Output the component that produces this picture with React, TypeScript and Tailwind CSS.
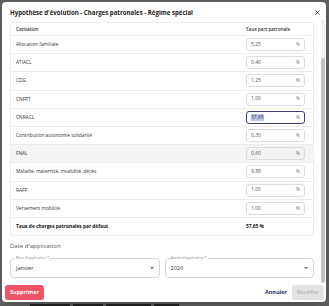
import { X, ChevronDown } from "lucide-react";

const rows = [
  { label: "Allocation familiale", value: "5,25" },
  { label: "ATIACL", value: "0,40" },
  { label: "CDG", value: "1,25" },
  { label: "CNFPT", value: "1,00" },
  { label: "CNRACL", value: "37,65", focused: true },
  { label: "Contribution autonomie solidarité", value: "0,30" },
  { label: "FNAL", value: "0,60", hover: true },
  { label: "Maladie, maternité, invalidité, décès", value: "9,88" },
  { label: "RAFP", value: "1,00" },
  { label: "Versement mobilité", value: "1,00" },
];

function RateInput({ value, focused, hover }: { value: string; focused?: boolean; hover?: boolean }) {
  return (
    <div
      className={
        "flex h-[13px] w-[59px] items-center justify-between rounded-[3px] pl-[4px] pr-[4px] text-[5px] text-[#555] " +
        (focused
          ? "border border-[#3d3f78] bg-white"
          : hover
          ? "border border-[#dcdcdc] bg-[#f3f3f3]"
          : "border border-[#dcdcdc] bg-white")
      }
    >
      <span className={focused ? "bg-[#b9c8f0] text-[#333]" : ""}>{value}</span>
      <span className="text-[#777]">%</span>
    </div>
  );
}

function SelectField({ label, value }: { label: string; value: string }) {
  return (
    <div className="relative flex h-[20px] flex-1 items-center justify-between rounded-[4px] border border-[#d4d4d4] pl-[5px] pr-[4px]">
      <span className="absolute left-[4px] top-[-4px] bg-white px-[1px] text-[3.6px] leading-[6px] text-[#888]">
        {label}
      </span>
      <span className="text-[5.5px] text-[#333]">{value}</span>
      <ChevronDown className="h-[6px] w-[6px] fill-[#666] text-[#666]" strokeWidth={3} />
    </div>
  );
}

export default function App() {
  return (
    <div
      className="relative h-[306px] w-[329px] overflow-hidden bg-[#5e5e5e]"
      style={{ fontFamily: '"Open Sans", "Liberation Sans", sans-serif' }}
    >
      {/* page behind the backdrop, only a blurred sliver shows */}
      <div className="absolute bottom-0 left-[30px] flex gap-[3px] blur-[0.7px]">
        <div className="h-[2px] w-[40px] bg-[#222]" />
        <div className="h-[2px] w-[30px] bg-[#222]" />
        <div className="h-[2px] w-[45px] bg-[#222]" />
        <div className="h-[2px] w-[25px] bg-[#222]" />
      </div>
      <div className="absolute left-[2px] top-[2px] flex h-[300px] w-[324px] flex-col rounded-[4px] bg-white shadow-lg">
        <div className="flex h-[18px] shrink-0 items-center justify-between pl-[8px] pr-[5px] pt-[3px]">
          <h2 className="text-[6.1px] font-bold text-[#222]">
            Hypothèse d'évolution - Charges patronales - Régime spécial
          </h2>
          <X className="h-[7px] w-[7px] text-[#333]" strokeWidth={3} />
        </div>

        <div className="flex min-h-0 flex-1">
          <div className="flex-1 pl-[8px] pr-[7px] pt-[2px]">
            <div className="overflow-hidden rounded-[3px] border border-[#ececec]">
              <div className="flex h-[13px] items-center border-b border-[#ececec] text-[4.6px] font-semibold text-[#333]">
                <span className="flex-1 pl-[5px]">Cotisation</span>
                <span className="w-[67px]">Taux part patronale</span>
              </div>
              {rows.map((r) => (
                <div
                  key={r.label}
                  className={
                    "flex h-[18.2px] items-center border-b border-[#ececec] " +
                    (r.hover ? "bg-[#f5f5f5]" : "bg-white")
                  }
                >
                  <span className="flex-1 pl-[5px] text-[4.8px] text-[#333]">{r.label}</span>
                  <div className="w-[67px]">
                    <RateInput value={r.value} focused={r.focused} hover={r.hover} />
                  </div>
                </div>
              ))}
              <div className="flex h-[17px] items-center text-[4.8px] font-bold text-[#111]">
                <span className="flex-1 pl-[5px]">Taux de charges patronales par défaut</span>
                <span className="w-[67px]">57,65 %</span>
              </div>
            </div>

            <p className="mt-[6px] text-[6px] text-[#555]">Date d'application</p>
            <div className="mt-[7px] flex gap-[5px]">
              <SelectField label="Mois d'application *" value="Janvier" />
              <SelectField label="Année d'application *" value="2026" />
            </div>
          </div>
          <div className="mr-[1px] flex w-[4px] flex-col bg-[#f1f1f1]">
            <div className="mt-[38px] h-[225px] rounded-[2px] bg-[#c2c2c2]" />
          </div>
        </div>

        <div className="flex h-[19px] shrink-0 items-center justify-between pb-[1px] pl-[3px] pr-[2px]">
          <button className="h-[15px] rounded-[3px] bg-[#ee5466] px-[5px] text-[5.5px] font-bold text-white">
            Supprimer
          </button>
          <div className="flex items-center gap-[5px]">
            <button className="text-[5.5px] font-bold text-[#2d2f6b]">Annuler</button>
            <button className="h-[15px] w-[32px] rounded-[3px] bg-[#e3e3e3] text-[5.5px] font-semibold text-[#b5b5b5]">
              Modifier
            </button>
          </div>
        </div>
      </div>
    </div>
  );
}
